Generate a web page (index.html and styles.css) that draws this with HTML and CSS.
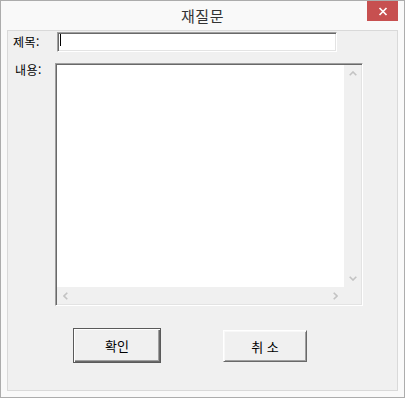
FILE: index.html
```html
<!DOCTYPE html>
<html lang="ko">
<head>
<meta charset="utf-8">
<title>재질문</title>
<link rel="stylesheet" href="styles.css">
</head>
<body>
<div class="window">
  <div class="titlebar">
    <div class="spacer"></div>
    <div class="title">재질문</div>
    <div class="close-wrap">
      <div class="close">
        <svg width="10" height="9" viewBox="0 0 10 9"><path d="M1.5 1 L8.5 8 M8.5 1 L1.5 8" stroke="#fff" stroke-width="1.7" fill="none"/></svg>
      </div>
    </div>
  </div>
  <div class="client">
    <div class="row row-title">
      <div class="lbl lbl-title">제목:</div>
      <div class="input"><span class="caret"></span></div>
    </div>
    <div class="row row-memo">
      <div class="lbl lbl-memo">내용:</div>
      <div class="memo">
        <div class="memo-text"></div>
        <div class="vscroll">
          <div class="arrow"><svg width="8" height="5" viewBox="0 0 8 5"><polyline points="0.7,4.3 4,1 7.3,4.3" stroke="#c3c3c3" stroke-width="1.6" fill="none"/></svg></div>
          <div class="arrow"><svg width="8" height="5" viewBox="0 0 8 5"><polyline points="0.7,0.7 4,4 7.3,0.7" stroke="#c3c3c3" stroke-width="1.6" fill="none"/></svg></div>
        </div>
        <div class="hscroll">
          <div class="arrow"><svg width="5" height="8" viewBox="0 0 5 8"><polyline points="4.3,0.7 1,4 4.3,7.3" stroke="#c3c3c3" stroke-width="1.6" fill="none"/></svg></div>
          <div class="arrow"><svg width="5" height="8" viewBox="0 0 5 8"><polyline points="0.7,0.7 4,4 0.7,7.3" stroke="#c3c3c3" stroke-width="1.6" fill="none"/></svg></div>
        </div>
        <div class="corner"></div>
      </div>
    </div>
    <div class="buttons">
      <div class="btn btn-default">확인</div>
      <div class="btn btn-cancel">취 소</div>
    </div>
  </div>
</div>
</body>
</html>
```
FILE: styles.css
```css
html, body {
  margin: 0;
  padding: 0;
}
body {
  width: 405px;
  height: 398px;
  overflow: hidden;
  font-family: "Noto Sans CJK KR", "Noto Sans", sans-serif;
  font-size: 12px;
  color: #000;
}
.window {
  box-sizing: border-box;
  width: 405px;
  height: 398px;
  border: 1px solid #acacac;
  background: #f9f9f9;
  padding: 0 6px 6px;
  display: flex;
  flex-direction: column;
}
.titlebar {
  height: 29px;
  display: grid;
  grid-template-columns: 1fr auto 1fr;
  align-items: start;
}
.title {
  font-size: 15px;
  line-height: 29px;
  color: #333;
  letter-spacing: 0.5px;
}
.close-wrap {
  display: flex;
  justify-content: flex-end;
}
.close {
  width: 31px;
  height: 20px;
  background: #c75050;
  display: flex;
  align-items: center;
  justify-content: center;
}
.client {
  box-sizing: border-box;
  height: 361px;
  border: 1px solid #d9d9d9;
  background: #f0f0f0;
  padding-top: 1px;
  display: flex;
  flex-direction: column;
}
.row {
  display: flex;
}
.row-title {
  align-items: center;
  height: 20px;
}
.lbl {
  box-sizing: border-box;
  line-height: 14px;
  letter-spacing: 0.5px;
}
.lbl-title {
  width: 49px;
  padding-left: 5px;
}
.lbl-memo {
  width: 47px;
  padding-left: 7px;
}
.input {
  box-sizing: border-box;
  width: 280px;
  height: 20px;
  background: #fff;
  border: 1px solid;
  border-color: #a0a0a0 #fff #fff #a0a0a0;
  box-shadow: inset 1px 1px #696969, inset -1px -1px #e3e3e3;
  padding: 1px 0 0 2px;
  display: flex;
}
.caret {
  width: 1px;
  height: 12px;
  background: #000;
}
.row-memo {
  margin-top: 11px;
  align-items: flex-start;
}
.memo {
  box-sizing: border-box;
  width: 308px;
  height: 243px;
  border: 1px solid;
  border-color: #a0a0a0 #fff #fff #a0a0a0;
  box-shadow: inset 1px 1px #696969, inset -1px -1px #e3e3e3;
  padding: 1px;
  display: grid;
  grid-template-columns: 1fr 17px;
  grid-template-rows: 1fr 17px;
  background: #f0f0f0;
}
.memo-text {
  background: #fff;
}
.vscroll {
  display: flex;
  flex-direction: column;
  justify-content: space-between;
}
.hscroll {
  display: flex;
  justify-content: space-between;
}
.arrow {
  width: 17px;
  height: 17px;
  display: flex;
  align-items: center;
  justify-content: center;
}
.buttons {
  display: flex;
  align-items: flex-start;
  margin-top: 22px;
  padding-left: 65px;
  gap: 62px;
}
.btn {
  box-sizing: border-box;
  display: flex;
  align-items: center;
  justify-content: center;
  font-size: 13px;
  background: #f0f0f0;
  border: 1px solid;
  border-color: #fff #696969 #696969 #fff;
  box-shadow: inset 1px 1px #f8f8f8, inset -1px -1px #a0a0a0;
}
.btn-default {
  width: 88px;
  height: 35px;
  border-color: #5a5a5a;
  box-shadow: inset 1px 1px #fff, inset -1px -1px #696969, inset -2px -2px #a0a0a0;
}
.btn-cancel {
  width: 84px;
  height: 32px;
  margin-top: 2px;
}
```
